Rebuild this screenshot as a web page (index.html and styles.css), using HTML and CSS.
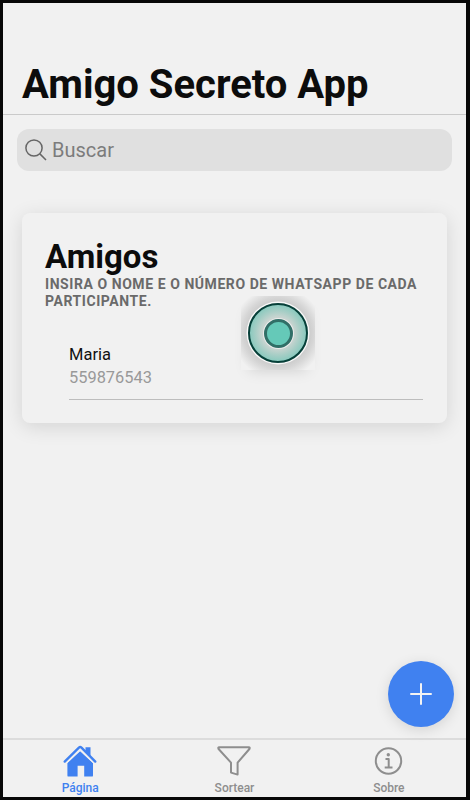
FILE: index.html
```html
<!DOCTYPE html>
<html lang="pt-BR">
<head>
    <meta charset="UTF-8">
    <meta name="viewport" content="width=device-width, initial-scale=1.0">
    <title>Amigo Secreto App</title>
    <link rel="stylesheet" href="styles.css">
</head>
<body>
    <div class="app">
        <header class="header">
            <h1>Amigo Secreto App</h1>
        </header>

        <main class="content">
            <label class="searchbar">
                <svg class="search-icon" viewBox="0 0 22 22">
                    <circle cx="9" cy="9" r="8.1"/>
                    <path d="M14.9 14.9L21 21"/>
                </svg>
                <input type="text" placeholder="Buscar">
            </label>

            <section class="card">
                <h2>Amigos</h2>
                <p class="subtitle">Insira o nome e o número de whatsapp de cada participante.</p>
                <div class="item">
                    <h3>Maria</h3>
                    <p>559876543</p>
                </div>
                <span class="touch"><span class="touch-ring"><span class="touch-dot"></span></span></span>
            </section>

            <button class="fab" aria-label="Adicionar">
                <svg viewBox="0 0 22 22"><path d="M11 1v20M1 11h20"/></svg>
            </button>
        </main>

        <nav class="tabs">
            <a class="tab active">
                <svg viewBox="0 0 34 34">
                    <path class="fill" d="M17 7L30 19v12.4a1.2 1.2 0 0 1-1.2 1.2h-7.6V21.7h-6.6V32.6H5.6a1.2 1.2 0 0 1-1.2-1.2V19z"/>
                    <path class="roof-gap" d="M1.8 19L17.2 4.8L32.4 19"/>
                    <path class="fill" d="M22.5 8V3.2h5V12.5z"/>
                    <path class="roof" d="M1.7 17.6L15.9 3.6Q17.2 2.5 18.5 3.6L32.3 17.6"/>
                </svg>
                <span>Página</span>
            </a>
            <a class="tab">
                <svg viewBox="0 0 34 34">
                    <path class="line" d="M2.2 3.2H31.8Q33.2 3.2 32.4 5L20.6 18.7V30.6L14 28.6V18.7L1.6 5Q.8 3.2 2.2 3.2z"/>
                </svg>
                <span>Sortear</span>
            </a>
            <a class="tab">
                <svg viewBox="0 0 34 34">
                    <circle class="line" cx="16.5" cy="17" r="12.7"/>
                    <circle class="fill" cx="16.3" cy="10.8" r="1.7"/>
                    <path class="line" d="M13.5 15H16.7V23.2M12.7 23.4H20.5"/>
                </svg>
                <span>Sobre</span>
            </a>
        </nav>
    </div>
</body>
</html>
```

FILE: styles.css
```css
* {
    box-sizing: border-box;
    margin: 0;
    padding: 0;
}
body {
    background: #080808;
    font-family: Roboto, sans-serif;
    height: 800px;
    padding: 3px 4px 3px 3px;
    overflow: hidden;
}
.app {
    display: flex;
    flex-direction: column;
    height: 794px;
    background: #f1f1f1;
    overflow: hidden;
}
.header {
    height: 112px;
    padding: 58px 19px 0;
    border-bottom: 1px solid #cacaca;
}
h1 {
    font-size: 40px;
    line-height: 47px;
    font-weight: 700;
    color: #0c0c0c;
    white-space: nowrap;
}
.content {
    position: relative;
    flex: 1;
    padding: 14px 14px 0;
}
.searchbar {
    display: flex;
    align-items: center;
    height: 42px;
    padding: 0 8px;
    border-radius: 12px;
    background: #e0e0e0;
}
.search-icon {
    width: 22px;
    height: 22px;
    margin-right: 5px;
    fill: none;
    stroke: #666;
    stroke-width: 1.5;
}
.searchbar input {
    flex: 1;
    border: none;
    outline: none;
    background: none;
    font-family: inherit;
    font-size: 20px;
}
.searchbar input::placeholder {
    color: #7c7c7c;
    opacity: 1;
}
.card {
    position: relative;
    height: 210px;
    margin: 42px 5px 0;
    padding: 24px 24px 0 23px;
    border-radius: 8px;
    background: #f1f1f1;
    box-shadow: 0 4px 20px rgba(0,0,0,0.12);
}
h2 {
    font-size: 33px;
    line-height: 39px;
    font-weight: 700;
    color: #0c0c0c;
}
.subtitle {
    font-size: 14px;
    line-height: 16.5px;
    font-weight: 700;
    letter-spacing: 0.56px;
    text-transform: uppercase;
    color: #6a6a6a;
}
.item {
    height: 64px;
    margin: 27px 0 0 24px;
    padding-top: 9px;
    border-bottom: 1px solid #bdbdbd;
}
.item h3 {
    font-size: 16.5px;
    line-height: 20px;
    font-weight: 400;
    color: #111;
}
.item p {
    margin-top: 3px;
    font-size: 16.4px;
    line-height: 20px;
    color: #999;
}
.touch {
    position: absolute;
    top: 83px;
    left: 219px;
    width: 74px;
    height: 74px;
    display: flex;
    align-items: center;
    justify-content: center;
    background: radial-gradient(circle, #cccccc 31px, #d6d6d6 36px, rgba(241,241,241,0) 46px);
    box-shadow: 0 8px 14px -8px rgba(0,0,0,0.15);
}
.touch-ring {
    display: flex;
    align-items: center;
    justify-content: center;
    width: 60px;
    height: 60px;
    border: 2px solid #064039;
    border-radius: 50%;
    background: radial-gradient(circle, #c8d4d0 16px, #a8cec6 22px, #86c9bd 29px);
    box-shadow: 0 0 0 1.5px #f8f8f8;
}
.touch-dot {
    width: 29px;
    height: 29px;
    border: 3px solid #316f67;
    border-radius: 50%;
    background: #65c9b8;
    box-shadow: 0 0 0 1px #ececec;
}
.fab {
    position: absolute;
    right: 12px;
    bottom: 11px;
    width: 66px;
    height: 66px;
    display: flex;
    align-items: center;
    justify-content: center;
    border: none;
    border-radius: 50%;
    background: #4081f0;
    box-shadow: 0 3px 14px rgba(0,0,0,0.12);
}
.fab svg {
    width: 22px;
    height: 22px;
    stroke: #f3f3f3;
    stroke-width: 2;
    stroke-linecap: round;
}
.tabs {
    display: flex;
    height: 59px;
    border-top: 2px solid #dcdcdc;
}
.tab {
    flex: 1;
    display: flex;
    flex-direction: column;
    align-items: center;
    padding-top: 4px;
    font-size: 12px;
    line-height: 14px;
    font-weight: 500;
    color: #8e8e8e;
}
.tab.active {
    color: #4081f0;
}
.tab svg {
    width: 34px;
    height: 34px;
    margin-bottom: 3px;
}
.fill {
    fill: currentColor;
}
.line {
    fill: none;
    stroke: currentColor;
    stroke-width: 2;
    stroke-linejoin: round;
}
.roof {
    fill: none;
    stroke: currentColor;
    stroke-width: 2.4;
    stroke-linecap: round;
}
.roof-gap {
    fill: none;
    stroke: #f1f1f1;
    stroke-width: 3.4;
}
```
